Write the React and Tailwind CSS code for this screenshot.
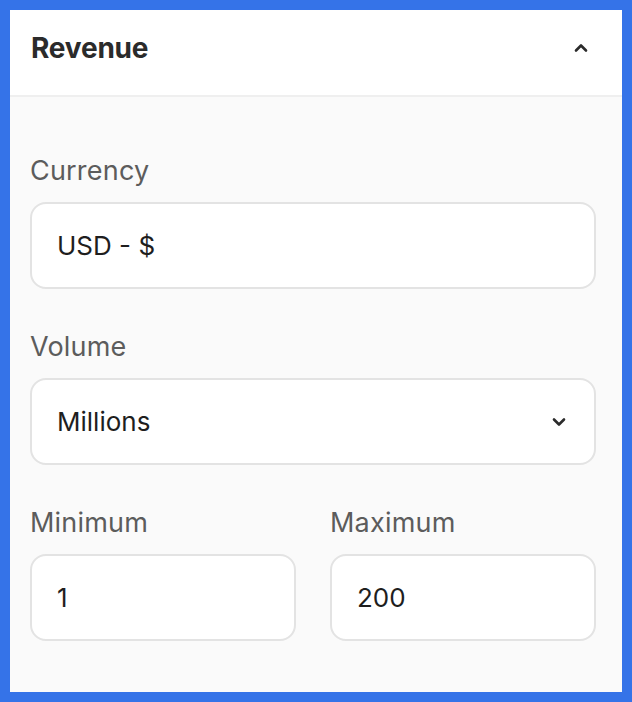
import React from 'react';

const font = { fontFamily: 'Inter, "Noto Sans", sans-serif' };

const Field = ({ label, value, chevron }) => (
  <div className="flex flex-col min-w-0">
    <label className="text-[27px] leading-[32px] text-[#5c5c5c] mb-[15px] tracking-[0.2px]">{label}</label>
    <div className="h-[87px] bg-white border-2 border-[#e3e3e3] rounded-[16px] flex items-center justify-between pl-[25px] pr-[28px]">
      <span className="text-[26px] text-[#1e1e1e]">{value}</span>
      {chevron && (
        <svg width="14" height="10" viewBox="0 0 14 10" fill="none">
          <path d="M2 2.5 L7 7.5 L12 2.5" stroke="#2b2b2b" strokeWidth="2.6" strokeLinecap="round" strokeLinejoin="round" />
        </svg>
      )}
    </div>
  </div>
);

export default function App() {
  return (
    <div className="w-[632px] h-[702px] bg-[#3573e8] p-[10px]" style={font}>
      <div className="h-full flex flex-col bg-[#fafafa]">
        <div className="h-[87px] bg-white border-b-2 border-[#efefef] flex items-center justify-between pl-[21px] pr-[34px] pb-[10px] shrink-0">
          <h2 className="text-[28px] font-bold text-[#2b2b2b] tracking-[-0.2px]">Revenue</h2>
          <svg width="14" height="10" viewBox="0 0 14 10" fill="none">
            <path d="M2 7.5 L7 2.5 L12 7.5" stroke="#2b2b2b" strokeWidth="2.6" strokeLinecap="round" strokeLinejoin="round" />
          </svg>
        </div>
        <div className="flex flex-col gap-[42px] pl-[20px] pr-[26px] pt-[58px]">
          <Field label="Currency" value="USD - $" />
          <Field label="Volume" value="Millions" chevron />
          <div className="grid grid-cols-2 gap-[34px]">
            <Field label="Minimum" value="1" />
            <Field label="Maximum" value="200" />
          </div>
        </div>
      </div>
    </div>
  );
}
